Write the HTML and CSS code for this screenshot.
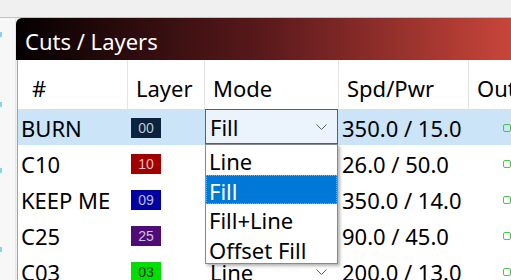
FILE: index.html
```html
<!DOCTYPE html>
<html lang="en">
<head>
    <meta charset="UTF-8">
    <meta name="viewport" content="width=device-width, initial-scale=1.0">
    <title>Cuts / Layers</title>
    <link rel="stylesheet" href="styles.css">
</head>
<body>
    <div class="topbar"></div>
    <div class="main">
        <div class="sidebar">
            <span class="tick t1"></span>
            <span class="tick t2"></span>
            <span class="tick t3"></span>
            <span class="tick t4"></span>
        </div>
        <div class="panel">
            <div class="title">Cuts / Layers</div>
            <div class="table">
                <div class="row head">
                    <div class="cell c-name">#</div>
                    <div class="cell">Layer</div>
                    <div class="cell">Mode</div>
                    <div class="cell">Spd/Pwr</div>
                    <div class="cell">Output</div>
                </div>

                <div class="row selected">
                    <div class="cell">BURN</div>
                    <div class="cell"><span class="swatch l00">00</span></div>
                    <div class="cell c-mode">
                        <div class="combo active">
                            <span>Fill</span>
                            <svg class="chevron" width="11" height="6" viewBox="0 0 11 6"><polyline points="0.5,0.5 5.5,5.5 10.5,0.5" /></svg>
                        </div>
                        <ul class="dropdown">
                            <li>Line</li>
                            <li class="current">Fill</li>
                            <li>Fill+Line</li>
                            <li>Offset Fill</li>
                        </ul>
                    </div>
                    <div class="cell">350.0 / 15.0</div>
                    <div class="cell"><span class="out-box"></span></div>
                </div>

                <div class="row">
                    <div class="cell">C10</div>
                    <div class="cell"><span class="swatch l10">10</span></div>
                    <div class="cell c-mode">
                        <div class="combo">
                            <span>Line</span>
                            <svg class="chevron" width="11" height="6" viewBox="0 0 11 6"><polyline points="0.5,0.5 5.5,5.5 10.5,0.5" /></svg>
                        </div>
                    </div>
                    <div class="cell">26.0 / 50.0</div>
                    <div class="cell"><span class="out-box"></span></div>
                </div>

                <div class="row">
                    <div class="cell">KEEP ME</div>
                    <div class="cell"><span class="swatch l09">09</span></div>
                    <div class="cell c-mode">
                        <div class="combo">
                            <span>Line</span>
                            <svg class="chevron" width="11" height="6" viewBox="0 0 11 6"><polyline points="0.5,0.5 5.5,5.5 10.5,0.5" /></svg>
                        </div>
                    </div>
                    <div class="cell">350.0 / 14.0</div>
                    <div class="cell"><span class="out-box"></span></div>
                </div>

                <div class="row">
                    <div class="cell">C25</div>
                    <div class="cell"><span class="swatch l25">25</span></div>
                    <div class="cell c-mode">
                        <div class="combo">
                            <span>Line</span>
                            <svg class="chevron" width="11" height="6" viewBox="0 0 11 6"><polyline points="0.5,0.5 5.5,5.5 10.5,0.5" /></svg>
                        </div>
                    </div>
                    <div class="cell">90.0 / 45.0</div>
                    <div class="cell"><span class="out-box"></span></div>
                </div>

                <div class="row">
                    <div class="cell">C03</div>
                    <div class="cell"><span class="swatch l03">03</span></div>
                    <div class="cell c-mode">
                        <div class="combo">
                            <span>Line</span>
                            <svg class="chevron" width="11" height="6" viewBox="0 0 11 6"><polyline points="0.5,0.5 5.5,5.5 10.5,0.5" /></svg>
                        </div>
                    </div>
                    <div class="cell">200.0 / 13.0</div>
                    <div class="cell"><span class="out-box"></span></div>
                </div>
            </div>
        </div>
    </div>
</body>
</html>
```

FILE: styles.css
```css
:root {
    --text: #000000;
    --select: #cce4f7;
    --accent: #0078d7;
    --rule: #e5e5e5;
}

body {
    margin: 0;
    width: 511px;
    height: 280px;
    overflow: hidden;
    background: #f0f0f0;
    font-family: 'Segoe UI', 'Noto Sans', sans-serif;
    font-size: 22px;
    color: var(--text);
}

.topbar {
    height: 17px;
    background: #f0f0f0;
    border-bottom: 1px solid #c2c2c2;
}

.main {
    display: flex;
    height: 262px;
}

.sidebar {
    width: 15px;
    background: #f7f7f7;
    border-right: 1px solid #e6e6e6;
    display: flex;
    flex-direction: column;
}

.tick {
    width: 2px;
    height: 5px;
    background: #86d2f2;
}

.t1 { margin-top: 14px; }
.t2 { margin-top: 65px; }
.t3 { margin-top: 61px; }
.t4 { margin-top: 74px; }

.panel {
    flex: 1;
    display: flex;
    flex-direction: column;
    min-width: 0;
}

.title {
    height: 40px;
    padding: 2px 0 0 9px;
    line-height: 42px;
    color: #ffffff;
    border-top-left-radius: 6px;
    background: linear-gradient(90deg, #050000 0%, #5a191b 50%, #c8453a 100%);
}

.table {
    flex: 1;
    margin-left: 1px;
    border-left: 1px solid #a3a3a3;
    background: #ffffff;
}

.row {
    display: grid;
    grid-template-columns: 110px 77px 134px 130px 1fr;
    height: 36px;
    line-height: 38px;
    white-space: nowrap;
}

.cell {
    position: relative;
    padding-left: 3px;
    display: flex;
    align-items: center;
}

.head {
    height: 49px;
}

.head .cell {
    box-sizing: border-box;
    border-right: 1px solid var(--rule);
    padding: 13px 0 0 8px;
    line-height: 30px;
    align-items: flex-start;
}

.head .c-name {
    padding-left: 14px;
}

.selected {
    background: var(--select);
}

.swatch {
    width: 30px;
    height: 20px;
    font-family: 'Liberation Sans', Arial, sans-serif;
    font-size: 14px;
    line-height: 20px;
    text-align: center;
    color: rgba(255, 255, 255, 0.75);
}

.l00 { background: #0c2340; }
.l10 { background: #a00000; }
.l09 { background: #0000a3; }
.l25 { background: #4f0b76; }
.l03 { background: #00e000; color: #0a2a0a; }

.c-mode {
    padding-left: 0;
}

.combo {
    box-sizing: border-box;
    width: 133px;
    height: 36px;
    padding: 0 10px 0 4px;
    border: 1px solid transparent;
    display: flex;
    align-items: center;
    justify-content: space-between;
}

.combo.active {
    height: 35px;
    align-self: flex-start;
    border-color: var(--accent);
    background: #ebf4fc;
}

.chevron {
    fill: none;
    stroke: #5f5f5f;
    stroke-width: 1;
}

.dropdown {
    position: absolute;
    top: 35px;
    left: 0;
    z-index: 2;
    width: 133px;
    box-sizing: border-box;
    margin: 0;
    padding: 0;
    list-style: none;
    background: #ffffff;
    border: 1px solid #8a8a8a;
    box-shadow: 2px 2px 3px rgba(0, 0, 0, 0.3);
}

.dropdown li {
    height: 29.5px;
    line-height: 32px;
    padding-left: 3px;
    overflow: hidden;
}

.dropdown .current {
    box-sizing: border-box;
    background: var(--accent);
    color: #ffffff;
    outline: 1px dotted #f09a3a;
    outline-offset: -1px;
}

.out-box {
    flex: none;
    width: 6px;
    height: 6px;
    margin-left: 31px;
    border: 1px solid #46c846;
    border-radius: 2px;
}
```
